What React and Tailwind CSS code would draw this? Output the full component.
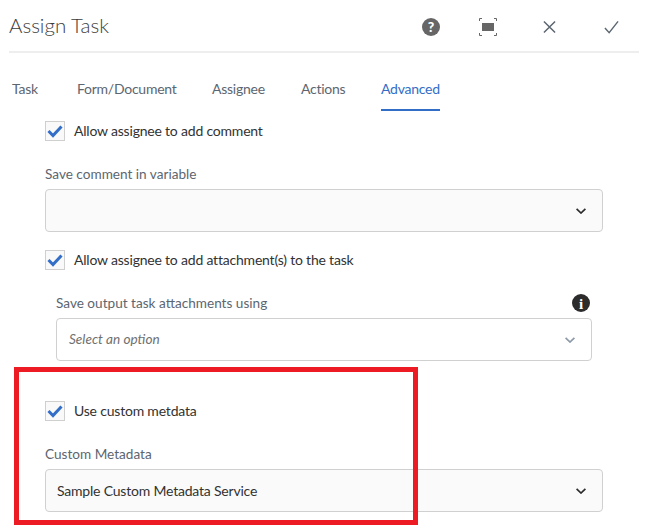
const tabs = [
  { name: 'Task', width: 'w-[65px]' },
  { name: 'Form/Document', width: 'w-[135px]' },
  { name: 'Assignee', width: 'w-[89px]' },
  { name: 'Actions', width: 'w-[80px]' },
]

function CheckRow({ label, className = '' }) {
  return (
    <div className={`flex h-5 items-center ${className}`}>
      <span className="flex h-5 w-5 items-center justify-center border border-[#cfcfcf] bg-[#f9f9f9]">
        <svg viewBox="0 0 16 16" className="h-[16px] w-[16px]" fill="none" stroke="#326ec8" strokeWidth="3">
          <path d="M1.5 8 6 12.500 14.500 3.500" />
        </svg>
      </span>
      <span className="ml-[9px] pb-[2px] text-[14px] tracking-[-0.2px] text-[#323232]">{label}</span>
    </div>
  )
}

function Select({ value, placeholder, className = '' }) {
  return (
    <div className={`flex h-[43px] items-center justify-between rounded-[4px] border border-[#d0d0d0] pl-[11px] pr-[16px] ${placeholder ? 'bg-white' : 'bg-[#fafafa]'} ${className}`}>
      {placeholder
        ? <span className="pl-px text-[13.600px] italic text-[#707070]">{placeholder}</span>
        : <span className="text-[14px] tracking-[-0.2px] text-[#323232]">{value}</span>}
      <svg viewBox="0 0 10 6" className="h-[6px] w-[10px]" fill="none" stroke={placeholder ? '#8c9aa8' : '#2c2c2c'} strokeWidth="1.700">
        <path d="M.6.8 5 5 9.400.8" />
      </svg>
    </div>
  )
}

export default function App() {
  return (
    <div className="relative h-[528px] w-[650px] overflow-hidden bg-white font-['Lato',sans-serif]">
      {/* Header */}
      <div className="ml-[9px] mr-[11px] flex h-[53px] items-center justify-between border-b-2 border-[#eeeeee] pt-[3px]">
        <h1 className="-mt-[4px] text-[20.500px] font-light text-[#3c3c3c]">Assign Task</h1>
        <div className="flex items-center pr-[20px]">
          <svg viewBox="0 0 18 18" className="mr-[39px] h-[18px] w-[18px]">
            <circle cx="9" cy="9" r="9" fill="#666666" />
            <text x="9" y="14" textAnchor="middle" fontSize="14" fontWeight="900" fill="#fff">?</text>
          </svg>
          <svg viewBox="0 0 18 18" className="mr-[46px] h-[18px] w-[18px]" fill="none" stroke="#666666" strokeWidth="1">
            <path d="M.5 3V.5H3M15 .5h2.500V3M17.500 15v2.500H15M3 17.500H.5V15" />
            <rect x="3" y="5" width="12" height="8" fill="#666666" stroke="none" />
          </svg>
          <svg viewBox="0 0 14 14" className="mr-[48px] h-[14px] w-[13px]" fill="none" stroke="#5c6670" strokeWidth="1.600">
            <path d="M1 1l12 12M13 1L1 13" />
          </svg>
          <svg viewBox="0 0 16 14" className="h-[14px] w-[15px]" fill="none" stroke="#5c6670" strokeWidth="1.500">
            <path d="M1 8l4.500 5L15 1" />
          </svg>
        </div>
      </div>

      {/* Tabs */}
      <div className="mt-[21px] flex h-[37px] items-start pl-3 text-[14px] tracking-[-0.25px] text-[#5c6670]">
        {tabs.map(t => <span key={t.name} className={`${t.width} leading-[30px]`}>{t.name}</span>)}
        <span className="h-[37px] border-b-2 border-[#326ec8] leading-[30px] text-[#326ec8]">Advanced</span>
      </div>

      {/* Form */}
      <div className="ml-[45px] w-[558px] pt-[10px]">
        <CheckRow label="Allow assignee to add comment" />
        <label className="mt-[23px] block text-[13.600px] leading-[20px] text-[#5c6670]">Save comment in variable</label>
        <Select className="mt-[5px]" />
        <CheckRow label="Allow assignee to add attachment(s) to the task" className="mt-[18px]" />
        <div className="mx-[11px]">
          <div className="mt-[23px] flex h-[20px] items-center justify-between">
            <label className="text-[13.600px] text-[#5c6670]">Save output task attachments using</label>
            <svg viewBox="0 0 18 18" className="mr-[2px] h-[18px] w-[18px]">
              <circle cx="9" cy="9" r="9" fill="#2c2c2c" />
              <text x="9" y="14.500" textAnchor="middle" fontSize="15" fontWeight="700" fontFamily="Liberation Serif, serif" fill="#fff">i</text>
            </svg>
          </div>
          <Select className="mt-[5px]" placeholder="Select an option" />
        </div>
        <CheckRow label="Use custom metdata" className="mt-[40px]" />
        <label className="mt-[23px] block text-[13.600px] leading-[20px] text-[#5c6670]">Custom Metadata</label>
        <Select className="mt-[5px]" value="Sample Custom Metadata Service" />
      </div>

      {/* Red annotation box */}
      <div className="absolute left-[14px] top-[367px] h-[158px] w-[404px] border-[5px] border-[#ed1c24]" />
    </div>
  )
}
